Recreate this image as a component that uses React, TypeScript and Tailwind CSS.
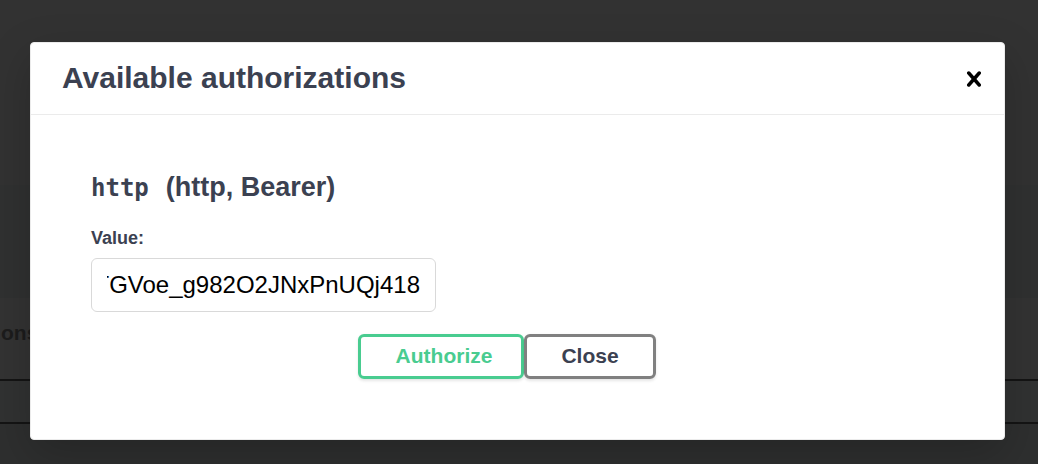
import React from "react";

export default function App() {
  const token =
    "eyJhbGciOiJIUzI1NiIsInR5cCI6IkpXVCJ9.eyJzdWIiOiIxMjM0NTY3ODkwIiwibmFtZSI6IkpvaG4gRG9lIn0.TGVoe_g982O2JNxPnUQj418";
  return (
    <div
      className="relative w-[1038px] h-[464px] overflow-hidden"
      style={{ fontFamily: '"Liberation Sans", Arial, sans-serif' }}
    >
      {/* dimmed underlying page */}
      <div className="flex flex-col w-full h-full">
        <div className="h-[185px] bg-[#323232]" />
        <div className="h-[113px] bg-[#303131]" />
        <div className="h-[81px] bg-[#333333] flex items-start">
          <span className="pl-[1px] pt-[24px] text-[21px] font-bold text-[#1c1c1c] leading-[21px]">
            ons
          </span>
        </div>
        <div className="h-[2px] bg-[#141414]" />
        <div className="h-[41px] bg-[#313232]" />
        <div className="h-[2px] bg-[#141414]" />
        <div className="flex-1 bg-[#2e2f2f]" />
      </div>

      {/* modal */}
      <div className="absolute left-[30px] top-[42px] w-[975px] h-[398px] bg-white rounded-[4px] border border-[#ebebeb] shadow-[0_15px_45px_rgba(0,0,0,0.2)] flex flex-col">
        <div className="flex items-center h-[72px] border-b border-[#ebebeb]">
          <h3 className="flex-1 pl-[31px] text-[30px] font-bold leading-[34.5px] text-[#3b4151]">
            Available authorizations
          </h3>
          <button className="px-[15px] flex items-center">
            <svg width="30" height="30" viewBox="0 0 20 20" fill="#000">
              <path d="M14.348 14.849c-.469.469-1.229.469-1.697 0L10 11.819l-2.651 3.029c-.469.469-1.229.469-1.697 0-.469-.469-.469-1.229 0-1.697l2.758-3.15-2.759-3.152c-.469-.469-.469-1.228 0-1.697.469-.469 1.228-.469 1.697 0L10 8.183l2.651-3.031c.469-.469 1.228-.469 1.697 0 .469.469.469 1.229 0 1.697l-2.758 3.152 2.758 3.15c.469.469.469 1.229 0 1.698z" />
            </svg>
          </button>
        </div>

        <div className="flex flex-col pl-[60px] pr-[60px]">
          <h4 className="mt-[57px] text-[27px] font-bold leading-[31px] text-[#3b4151] whitespace-pre">
            <code
              className="text-[24px] leading-none font-bold mr-[2px]"
              style={{ fontFamily: '"DejaVu Sans Mono", monospace' }}
            >
              http
            </code>
            {"\u00a0 (http, Bearer)"}
          </h4>
          <label className="mt-[25px] text-[18px] font-bold leading-[21px] text-[#3b4151]">
            Value:
          </label>
          <div className="mt-[9px] w-[345px] h-[54px] border border-[#d9d9d9] rounded-[6px] bg-white px-[15px] flex items-center">
            <div className="w-full overflow-hidden flex justify-end whitespace-nowrap text-[24px] leading-[27.6px] text-black">
              <span className="shrink-0">{token}</span>
            </div>
          </div>
          <div className="mt-[22px] flex justify-center">
            <button className="w-[166px] h-[45px] pl-[6px] pb-[2px] border-[3px] border-[#49cc90] rounded-[6px] text-[21px] font-bold text-[#49cc90] shadow-[0_1.5px_3px_rgba(0,0,0,0.1)] flex items-center justify-center">
              Authorize
            </button>
            <button className="mr-[21px] w-[132px] h-[45px] pb-[2px] border-[3px] border-[#808080] rounded-[6px] text-[21px] font-bold text-[#3b4151] shadow-[0_1.5px_3px_rgba(0,0,0,0.1)] flex items-center justify-center">
              Close
            </button>
          </div>
        </div>
      </div>
    </div>
  );
}
